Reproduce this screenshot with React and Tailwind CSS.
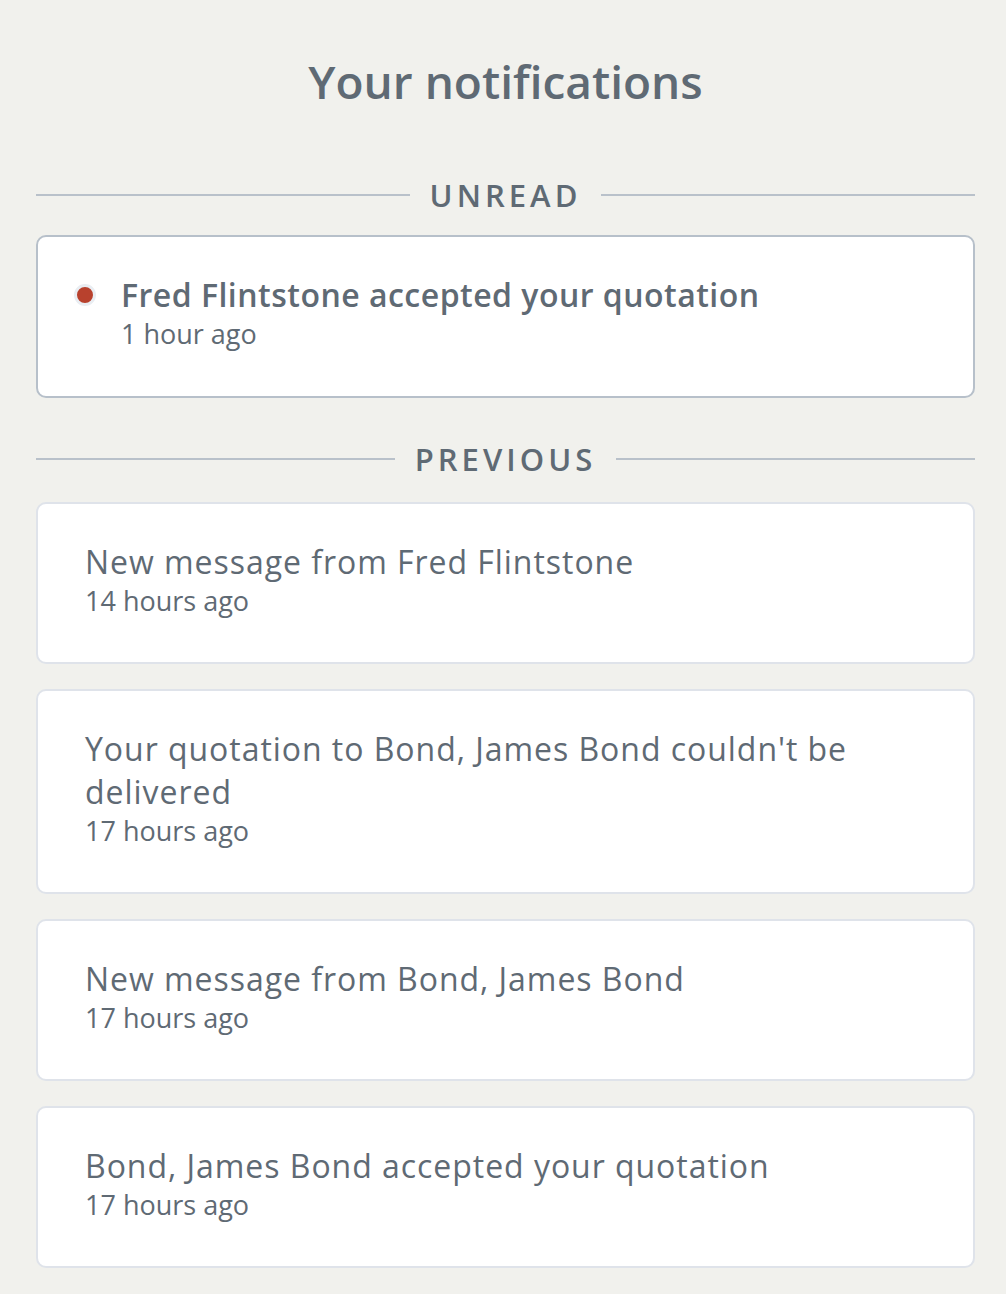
const unread = [
  { text: 'Fred Flintstone accepted your quotation', time: '1 hour ago' },
];

const previous = [
  { text: 'New message from Fred Flintstone', time: '14 hours ago' },
  { text: "Your quotation to Bond, James Bond couldn't be delivered", time: '17 hours ago' },
  { text: 'New message from Bond, James Bond', time: '17 hours ago' },
  { text: 'Bond, James Bond accepted your quotation', time: '17 hours ago' },
];

function SectionHeading({ label }) {
  return (
    <div className="flex items-center gap-5 h-[44px]">
      <div className="flex-1 h-[2px] bg-[#b9c1ca]" />
      <h2 className="text-[31px] font-semibold tracking-[0.13em] text-[#5f6a74] leading-none">{label}</h2>
      <div className="flex-1 h-[2px] bg-[#b9c1ca]" />
    </div>
  );
}

function UnreadCard({ item }) {
  return (
    <div className="bg-white border-2 border-[#b7c0ca] rounded-[10px] pl-[36px] pr-10 pt-[36px] pb-[44px] flex items-start gap-[25px]">
      <span className="mt-[11px] w-[22px] h-[22px] rounded-full bg-[#b8412d] border-[3px] border-[#e9edf2] shrink-0" />
      <div>
        <p className="text-[32px] leading-[43px] font-semibold tracking-[0.015em] text-[#5f6a74]">{item.text}</p>
        <p className="text-[27px] leading-[36px] text-[#5f6a74]">{item.time}</p>
      </div>
    </div>
  );
}

function Card({ item }) {
  return (
    <div className="bg-white border-2 border-[#dfe3ea] rounded-[10px] pl-[47px] pr-10 pt-[36px] pb-[43px]">
      <p className="text-[32px] leading-[43px] tracking-[0.03em] text-[#5f6a74]">{item.text}</p>
      <p className="text-[27px] leading-[36px] text-[#5f6a74]">{item.time}</p>
    </div>
  );
}

export default function App() {
  return (
    <div
      className="min-h-[1294px] bg-[#f1f1ed] pl-[36px] pr-[31px] pt-[51px] pb-10"
      style={{ fontFamily: '"Open Sans", "Liberation Sans", sans-serif' }}
    >
      <h1 className="text-center text-[46px] leading-[60px] font-semibold text-[#5f6a74]">Your notifications</h1>
      <div className="mt-[62px]">
        <SectionHeading label="UNREAD" />
      </div>
      <div className="mt-[18px] flex flex-col gap-[26px]">
        {unread.map((n, i) => (
          <UnreadCard key={i} item={n} />
        ))}
      </div>
      <div className="mt-[39px]">
        <SectionHeading label="PREVIOUS" />
      </div>
      <div className="mt-[21px] flex flex-col gap-[25px]">
        {previous.map((n, i) => (
          <Card key={i} item={n} />
        ))}
      </div>
    </div>
  );
}
